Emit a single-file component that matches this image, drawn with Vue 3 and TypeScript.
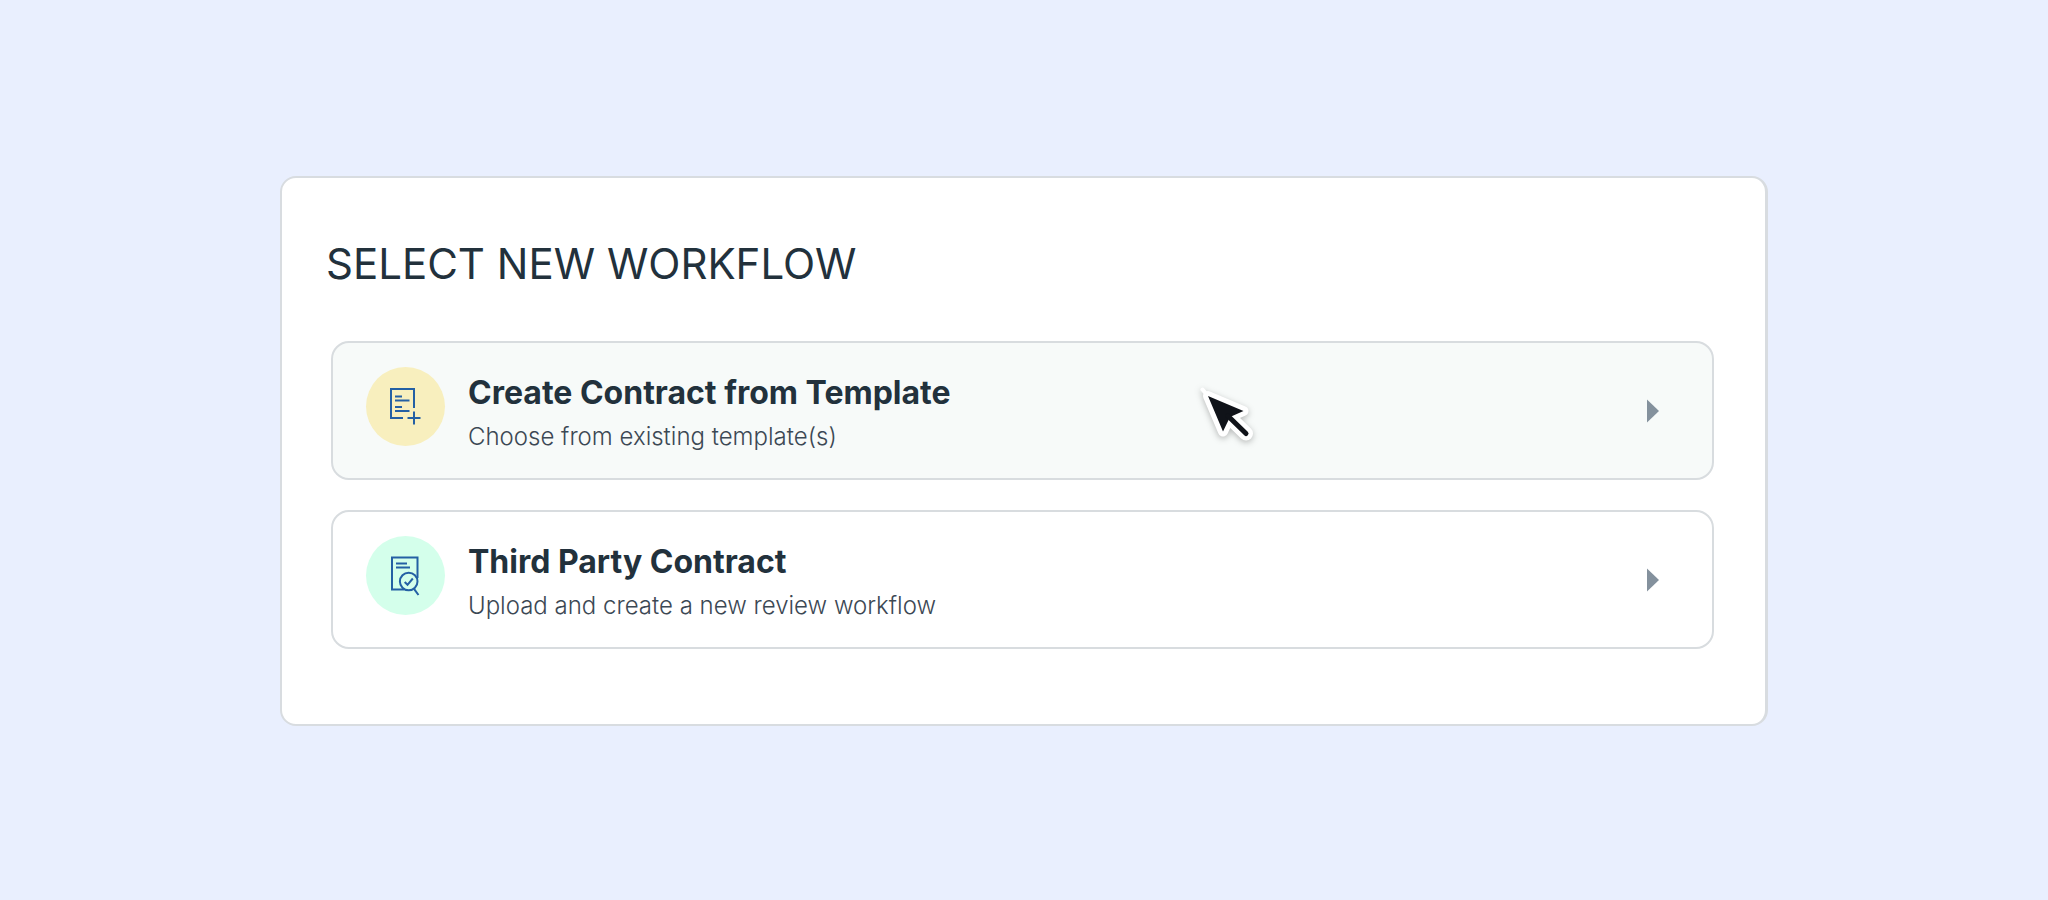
<script setup lang="ts">
interface Workflow {
  id: 'template' | 'third-party'
  title: string
  description: string
}

const workflows: Workflow[] = [
  { id: 'template', title: 'Create Contract from Template', description: 'Choose from existing template(s)' },
  { id: 'third-party', title: 'Third Party Contract', description: 'Upload and create a new review workflow' },
]
</script>

<template>
  <main class="page">
    <section class="card" aria-labelledby="heading">
      <h1 id="heading" class="heading">SELECT NEW WORKFLOW</h1>
      <ul class="list">
        <li v-for="flow in workflows" :key="flow.id" class="item">
          <button type="button" class="option" :class="{ hovered: flow.id === 'template' }">
            <span class="badge" :class="flow.id">
              <svg v-if="flow.id === 'template'" class="icon" viewBox="0 0 79 79" aria-hidden="true">
                <path d="M37 51H25V22H48V41" />
                <path d="M29 29.5H36M29 33.5H43.5M29 40H36M29 44H43.5" />
                <path d="M41.5 51H54.5M48 44.5V57.5" />
              </svg>
              <svg v-else class="icon" viewBox="0 0 79 79" aria-hidden="true">
                <path d="M38.5 53.5H26V21.5H51.5V42" />
                <path d="M30 27.5H41M30 31.5H44" />
                <circle cx="42.7" cy="45.5" r="8.8" />
                <path d="M48 52.8L52.5 59M38.7 46L41.5 48.8L46.8 42.5" />
              </svg>
            </span>
            <span class="text">
              <span class="title">{{ flow.title }}</span>
              <span class="description">{{ flow.description }}</span>
            </span>
            <svg class="arrow" viewBox="0 0 12 24" aria-hidden="true"><path d="M0 0.5L12 12L0 23.5Z" /></svg>
          </button>
          <svg v-if="flow.id === 'template'" class="cursor" viewBox="0 0 80 80" aria-hidden="true">
            <g class="outline">
              <path d="M18 16L53.5 31L40 37L33 51.5Z" />
              <path d="M38 36L56 53.5" class="tail" />
              <path d="M12.5 9.5L18 16" class="tip" />
            </g>
            <path d="M18 16L53.5 31L40 37L33 51.5Z" class="fill" />
            <path d="M38 36L56 53.5" class="stem" />
          </svg>
        </li>
      </ul>
    </section>
  </main>
</template>

<style>
body {
  margin: 0;
  background: #e9effe;
}
</style>

<style scoped>
.page {
  box-sizing: border-box;
  min-height: 100vh;
  padding: 176px 280px;
  background: #e9effe;
  color: #22313c;
  font-family: Inter, "Open Sans", sans-serif;
}

.card {
  box-sizing: border-box;
  padding: 60px 51px 75px 44px;
  border: 2px solid #d8dce0;
  border-right-width: 3px;
  border-radius: 16px;
  background: #fff;
}

.heading {
  margin: 0;
  font-size: 42px;
  line-height: 52px;
  font-weight: 400;
}

.list {
  display: flex;
  flex-direction: column;
  gap: 30px;
  margin: 51px 0 0 5px;
  padding: 0;
  list-style: none;
}

.item {
  position: relative;
}

.option {
  box-sizing: border-box;
  display: flex;
  align-items: flex-start;
  width: 100%;
  min-height: 139px;
  padding: 24px 53px 23px 33px;
  border: 2px solid #d8dcdf;
  border-radius: 18px;
  background: #fff;
  color: inherit;
  font: inherit;
  text-align: left;
  cursor: pointer;
}

.option.hovered {
  background: #f7faf9;
}

.badge {
  flex: none;
  width: 79px;
  height: 79px;
  margin-right: 23px;
  border-radius: 50%;
}

.badge.template {
  background: #f8efbe;
}

.badge.third-party {
  background: #d4ffeb;
}

.icon {
  display: block;
  width: 100%;
  height: 100%;
  fill: none;
  stroke: #2460a4;
  stroke-width: 2;
}

.text {
  display: flex;
  flex: 1;
  flex-direction: column;
  gap: 8px;
  padding-top: 6px;
}

.title {
  font-size: 32px;
  line-height: 40px;
  font-weight: 700;
}

.description {
  color: #3c4854;
  font-size: 24px;
  line-height: 32px;
  font-weight: 300;
}

.arrow {
  flex: none;
  align-self: center;
  width: 12px;
  height: 24px;
  fill: #84919d;
}

.cursor {
  position: absolute;
  top: 39px;
  left: 62%;
  width: 80px;
  height: 80px;
  margin-left: 2px;
  overflow: visible;
  pointer-events: none;
}

.outline {
  fill: #fff;
  stroke: #fff;
  stroke-width: 10;
  stroke-linejoin: round;
  stroke-linecap: round;
  filter: drop-shadow(0 2px 3px rgb(0 0 0 / 26%));
}

.tail {
  stroke-width: 14;
}

.tip {
  stroke-width: 4;
}

.fill {
  fill: #101319;
}

.stem {
  stroke: #101319;
  stroke-width: 5;
  stroke-linecap: round;
}
</style>
